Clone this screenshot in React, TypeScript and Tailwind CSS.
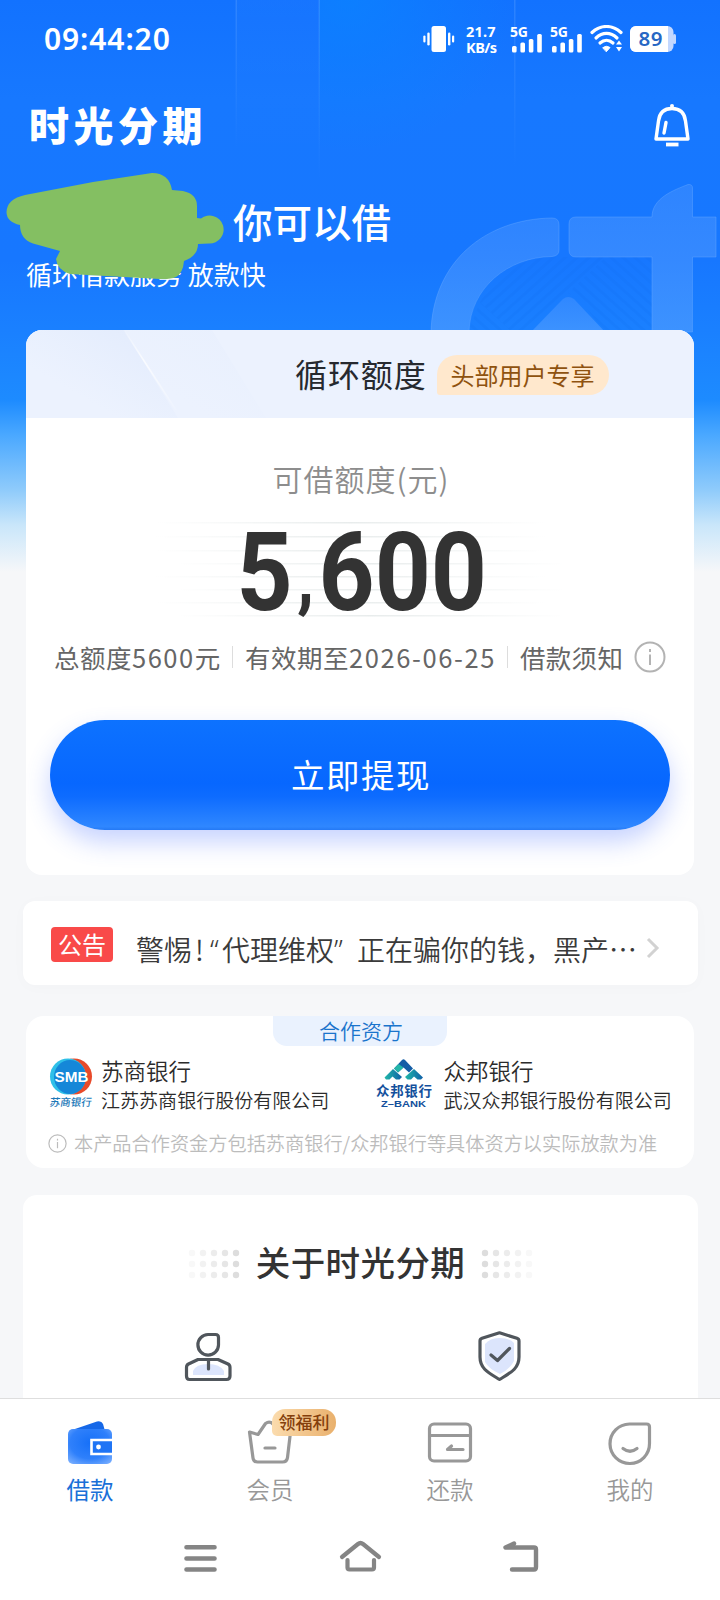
import React from "react";

const CJK = "font-['Noto_Sans_CJK_SC',sans-serif]";

function Signal() {
  return (
    <svg width="34" height="28" viewBox="0 0 34 28" fill="#fff" className="overflow-visible">
      <text x="0" y="11.6" fontSize="14" fontWeight="700" fontFamily="'Noto Sans', sans-serif" textLength="18">5G</text>
      <rect x="2" y="21" width="4.6" height="6.5" rx="1.5" />
      <rect x="10.4" y="17.5" width="4.6" height="10" rx="1.5" />
      <rect x="18.8" y="14" width="4.6" height="13.5" rx="1.5" />
      <rect x="27.2" y="9" width="4.6" height="18.5" rx="1.5" />
    </svg>
  );
}

function StatusBar() {
  return (
    <div className="flex h-[78px] items-center pl-[44px] pr-[44px] text-white">
      <span className="font-['Noto_Sans',sans-serif] text-[30px] font-semibold leading-none tracking-[0.9px]">09:44:20</span>
      <div className="ml-auto flex items-center">
        <svg width="32" height="28" viewBox="0 0 32 28" fill="#fff">
          <rect x="8.5" y="1" width="14.5" height="26" rx="2.5" />
          <rect x="4.3" y="7.5" width="2.4" height="13" rx="1.2" />
          <rect x="0.3" y="10.5" width="2.2" height="7" rx="1.1" />
          <rect x="25" y="7.5" width="2.4" height="13" rx="1.2" />
          <rect x="29" y="10.5" width="2.2" height="7" rx="1.1" />
        </svg>
        <div className="ml-[11px] w-[33px] whitespace-nowrap font-['Noto_Sans',sans-serif] text-[14.5px] font-bold leading-[16px]">
          <div className="tracking-[0.2px]">21.7</div>
          <div className="tracking-[-0.5px]">KB/s</div>
        </div>
        <div className="ml-[11px] flex gap-[6px]">
          <Signal />
          <Signal />
        </div>
        <svg className="ml-[6px]" width="34" height="28" viewBox="0 0 34 28" fill="none" stroke="#fff" strokeWidth="3.2" strokeLinecap="round">
          <path d="M2 7.500C10.500 -.5 22.500 -.5 31 7.500" />
          <path d="M6 13C12.500 6.800 20.500 6.800 27 13" />
          <path d="M10 18C14 14.300 19 14.300 23 18" />
          <path d="M13 22.500q3.500-2.500 7 0l-3.500 4z" fill="#fff" strokeWidth="1" strokeLinejoin="round" />
          <path d="M26 19.500l3-4 3 4zM26 22l3 4.500 3-4.500z" fill="#fff" stroke="none" />
        </svg>
        <svg className="ml-[6px]" width="46" height="28" viewBox="0 0 46 28">
          <rect x="0" y="1" width="43.500" height="26" rx="6" fill="#c3d8ff" />
          <rect x="43" y="9" width="3" height="10" rx="1.500" fill="#c3d8ff" />
          <path d="M6 1H38V27H6a6 6 0 0 1-6-6V7a6 6 0 0 1 6-6z" fill="#fff" />
          <text x="8.500" y="21.300" fontSize="20.500" fontWeight="600" fill="#2767c4" fontFamily="'Noto Sans', sans-serif" textLength="24">89</text>
        </svg>
      </div>
    </div>
  );
}

function HeroArt() {
  return (
    <svg className="absolute left-0 top-0" width="720" height="340" viewBox="0 0 720 340" fill="none">
      <defs>
        <linearGradient id="band" x1="0" y1="0" x2="0" y2="1">
          <stop offset="0" stopColor="#fff" stopOpacity="0.02" />
          <stop offset="1" stopColor="#fff" stopOpacity="0" />
        </linearGradient>
        <linearGradient id="seam" x1="0" y1="0" x2="0" y2="1">
          <stop offset="0" stopColor="#7ab4ff" stopOpacity="0.25" />
          <stop offset="1" stopColor="#7ab4ff" stopOpacity="0" />
        </linearGradient>
        <linearGradient id="mark" x1="0" y1="0" x2="0" y2="1">
          <stop offset="0" stopColor="#5a9dff" stopOpacity="0.35" />
          <stop offset="1" stopColor="#5fa5ff" stopOpacity="0.5" />
        </linearGradient>
        <pattern id="hatch" width="8" height="8" patternUnits="userSpaceOnUse" patternTransform="rotate(48)">
          <rect width="3" height="8" fill="#0a62e6" fillOpacity="0.1" />
        </pattern>
        <pattern id="hatchBack" width="8" height="8" patternUnits="userSpaceOnUse" patternTransform="rotate(-48)">
          <rect width="3" height="8" fill="#0a62e6" fillOpacity="0.1" />
        </pattern>
        <radialGradient id="glow" cx="0.15" cy="0" r="0.85">
          <stop offset="0" stopColor="#0a84ff" stopOpacity="0.7" />
          <stop offset="1" stopColor="#0a84ff" stopOpacity="0" />
        </radialGradient>
      </defs>
      <rect x="236" y="0" width="84" height="160" fill="url(#band)" />
      <rect x="319" y="0" width="196" height="180" fill="url(#glow)" />
      <rect x="235.500" y="0" width="1.500" height="150" fill="url(#seam)" />
      <rect x="318.500" y="0" width="1.500" height="180" fill="url(#seam)" />
      <rect x="514" y="0" width="1.500" height="168" fill="url(#seam)" />
      <path d="M556 257H606L530 330H510L480 302Q505 258 556 257z" fill="url(#hatch)" />
      <path d="M606 257H652V330H603L580 300L568 293z" fill="url(#hatchBack)" />
      <path d="M480 302L510 330H469z" fill="url(#hatchBack)" />
      <path d="M431 332C433 262 485 219 552 218Q559 218 559 225V250Q559 256 552 256.500C508 257 470 288 469 332z" fill="url(#mark)" stroke="#6aabff" strokeOpacity="0.4" />
      <path d="M576 217H652C652 198 674 190 688 184.500Q692.500 184 692.500 188V217H716V257H692.500V332H652V257H576Q569 257 569 250V224Q569 217 576 217z" fill="url(#mark)" stroke="#6aabff" strokeOpacity="0.4" />
      <path d="M531 332L563 299Q568 295 574 299L605 332z" fill="url(#mark)" />
    </svg>
  );
}

function Info({ size, stroke }: { size: number; stroke: number }) {
  return (
    <svg width={size} height={size} viewBox="0 0 32 32" fill="none" stroke="currentColor" strokeWidth={stroke} className="shrink-0">
      <circle cx="16" cy="16" r="14.500" />
      <path d="M16 13.500V24" />
      <path d="M16 8V11" />
    </svg>
  );
}

function QuotaCard() {
  const lines = [0, 14, 28, 41, 54, 67, 80, 93];
  return (
    <section className="mx-[26px] flex h-[545px] flex-col overflow-hidden rounded-[16px] bg-white">
      <div className="relative flex h-[88px] shrink-0 items-center bg-[#ecf2fe] pl-[269px]">
        <svg className="absolute left-0 top-0" width="300" height="88" viewBox="0 0 300 88">
          <defs>
            <linearGradient id="sheenA" x1="0" y1="1" x2="1" y2="0">
              <stop offset="0.3" stopColor="#e3ecfd" stopOpacity="0" />
              <stop offset="1" stopColor="#e1eafc" />
            </linearGradient>
            <linearGradient id="edge" x1="0" y1="0" x2="0" y2="1">
              <stop offset="0" stopColor="#fff" stopOpacity="0.1" />
              <stop offset="0.4" stopColor="#fff" stopOpacity="0.7" />
              <stop offset="1" stopColor="#fff" stopOpacity="0.1" />
            </linearGradient>
          </defs>
          <path d="M0 0H98L152 88H0z" fill="url(#sheenA)" />
          <path d="M98 0H186L240 88H152z" fill="url(#sheenA)" opacity="0.35" />
          <path d="M98 0L150 80" stroke="url(#edge)" strokeWidth="1.500" />
        </svg>
        <span className="relative whitespace-nowrap pb-[2px] text-[32px] leading-none tracking-[0.900px] text-[#26292f]">循环额度</span>
        <span className="relative ml-[10px] mt-px flex h-[40px] w-[172px] items-center justify-center rounded-[20px] rounded-bl-[3px] bg-[#ffe8cd] text-[24px] leading-none text-[#8f520f]">头部用户专享</span>
      </div>
      <div className="mt-[44px] pl-[2px] text-center text-[30px] font-[350] leading-[32px] tracking-[1px] text-[#8d8d8d]">可借额度(元)</div>
      <div className="relative mt-[28px] flex h-[94px] justify-center">
        <svg className="absolute left-[130px] top-0" width="410" height="95" viewBox="0 0 410 95">
          <defs>
            <linearGradient id="rule" x1="0" x2="1" y1="0" y2="0">
              <stop offset="0" stopColor="#eaeeee" stopOpacity="0" />
              <stop offset="0.5" stopColor="#e8ecec" />
              <stop offset="1" stopColor="#eaeeee" stopOpacity="0" />
            </linearGradient>
          </defs>
          {lines.map((y) => (
            <rect key={y} x={y % 2 ? 20 : 0} y={y} width="390" height="1.500" fill="url(#rule)" />
          ))}
        </svg>
        <span className="relative left-[2px] top-[-4px] h-[110px] origin-center scale-x-[0.89] whitespace-nowrap font-['Roboto',sans-serif] text-[110px] font-bold leading-[110px] text-[#333]">
          5<span className="relative -top-[7px] inline-block w-[29px] pl-[5px] text-[78px] leading-none">,</span>600
        </span>
      </div>
      <div className="mt-[26px] flex h-[30px] items-center whitespace-nowrap pl-[28px] text-[25.500px] leading-none text-[#666]">
        <span className="w-[167px] tracking-[0.5px]">总额度<span className="tracking-[1.500px]">5600</span>元</span>
        <i className="ml-[11px] h-[22px] w-px bg-[#ddd]" />
        <span className="ml-[12px] w-[250px] tracking-[0.5px]">有效期至<span className="tracking-[1.600px]">2026-06-25</span></span>
        <i className="ml-[12px] h-[22px] w-px bg-[#ddd]" />
        <span className="ml-[12px] w-[104px] tracking-[0.3px]">借款须知</span>
        <span className="ml-[10px] text-[#b3b3b3]"><Info size={32} stroke={2} /></span>
      </div>
      <button className="ml-[24px] mt-[48px] flex h-[110px] w-[620px] shrink-0 items-center justify-center rounded-full bg-[linear-gradient(180deg,#0d72ff_0%,#0767ff_58%,#0e6cff_70%,#2f87ff_97%,#2479f5_100%)] pb-[3px] pl-[2px] text-[33.500px] leading-none tracking-[1.500px] text-white shadow-[0_12px_24px_rgba(70,110,255,0.3)]">
        立即提现
      </button>
    </section>
  );
}

function Notice() {
  return (
    <section className="ml-[23px] mt-[26px] flex h-[84px] w-[675px] shrink-0 items-center rounded-[12px] bg-white pl-[28px] shadow-[0_2px_16px_rgba(0,0,0,0.02)]">
      <span className="mt-[2px] flex h-[35px] w-[62px] items-center justify-center rounded-[4px] bg-[#f94a49] text-[24px] leading-none text-white">公告</span>
      <p className="ml-[23px] mt-[11px] flex whitespace-nowrap text-[28px] font-[350] leading-none text-[#3a3a3a]">
        <span className="w-[59px]">警惕</span>
        <span className="w-[15px]">!</span>
        <span className="w-[12px] font-['Noto_Sans',sans-serif]">“</span>
        <span className="w-[112px]">代理维权</span>
        <span className="w-[23px] font-['Noto_Sans',sans-serif]">”</span>
        <span className="w-[252px]">正在骗你的钱，黑产</span>
        <span className="w-[28px]">…</span>
      </p>
      <svg className="ml-[9px] mt-[10px]" width="14" height="22" viewBox="0 0 14 22" fill="none" stroke="#d2d2d2" strokeWidth="3">
        <path d="M2 2L11 11L2 20" />
      </svg>
    </section>
  );
}

function SmbLogo() {
  return (
    <svg width="46" height="52" viewBox="0 0 46 52" className="shrink-0">
      <ellipse cx="25" cy="18.500" rx="18" ry="18" fill="#e84a2a" />
      <ellipse cx="19" cy="18.500" rx="18" ry="18" fill="#2fc0e8" />
      <ellipse cx="21" cy="19" rx="16" ry="17" fill="#1587d8" />
      <text x="5.500" y="23.700" fontSize="14.500" fontWeight="700" fill="#fff" fontFamily="'Liberation Sans', sans-serif" textLength="34" lengthAdjust="spacingAndGlyphs">SMB</text>
      <text x="1" y="48" fontSize="10.500" fontWeight="500" fill="#1b78b8" fontFamily="'Noto Sans CJK SC', sans-serif" textLength="42" transform="skewX(-8) translate(6 0)">苏商银行</text>
    </svg>
  );
}

function ZBankLogo() {
  return (
    <svg width="56" height="52" viewBox="0 0 56 52" className="shrink-0">
      <defs>
        <linearGradient id="zg" x1="0" x2="1" y1="0" y2="0">
          <stop offset="0" stopColor="#20b8a8" />
          <stop offset="1" stopColor="#0f5fa8" />
        </linearGradient>
      </defs>
      <path d="M18 10.500L26 2Q27.500 .5 29 2L37 10.500L33 14.500L27.500 9.500L22 14.500z" fill="#145da6" />
      <path d="M18 10.500L22.500 6L27.500 9.500L22 14.500z" fill="#23b6a8" />
      <path d="M8.500 19.500L17 11L26 19L23.500 21.500H20L16.500 18.500L13.500 21.500H10z" fill="url(#zg)" />
      <path d="M29 19L38 11L47 19.500L45 21.500H41.500L38 18.500L35 21.500H31.500z" fill="url(#zg)" />
      <text x="0" y="38" fontSize="13.500" fontWeight="700" fill="#14509c" fontFamily="'Noto Sans CJK SC', sans-serif" textLength="56">众邦银行</text>
      <text x="5" y="48.800" fontSize="8.500" fontWeight="700" fill="#14509c" fontFamily="'Liberation Sans', sans-serif" textLength="45" lengthAdjust="spacingAndGlyphs">Z–BANK</text>
    </svg>
  );
}

function Bank({ name, full }: { name: string; full: string }) {
  return (
    <div className="whitespace-nowrap font-[350] text-[#2b2b2b]">
      <div className="text-[22.500px] leading-[30px]">{name}</div>
      <div className="text-[19.050px] leading-[30px]">{full}</div>
    </div>
  );
}

function Partners() {
  return (
    <section className="mx-[26px] mt-[31px] flex h-[152px] shrink-0 flex-col rounded-[18px] bg-white">
      <div className="mx-auto flex h-[30px] w-[174px] shrink-0 items-center justify-center rounded-b-[14px] bg-[#eaf2fe] pb-[2px] pl-[2px] text-[21px] font-[350] leading-none text-[#1a74cc]">合作资方</div>
      <div className="mt-[9px] flex h-[60px] items-start">
        <div className="ml-[23px] mt-[3px] w-[52px]"><SmbLogo /></div>
        <Bank name="苏商银行" full="江苏苏商银行股份有限公司" />
        <div className="ml-[47px] mt-[3px] w-[67px]"><ZBankLogo /></div>
        <Bank name="众邦银行" full="武汉众邦银行股份有限公司" />
      </div>
      <div className="mt-[17px] flex items-center whitespace-nowrap pl-[22px] text-[19.200px] font-[350] leading-[22px] text-[#bcbcbc]">
        <Info size={19} stroke={2} />
        <span className="ml-[7px]">本产品合作资金方包括苏商银行/众邦银行等具体资方以实际放款为准</span>
      </div>
    </section>
  );
}

function Dots({ flip }: { flip?: boolean }) {
  const cols = [0.04, 0.08, 0.11, 0.15, 0.2];
  return (
    <svg width="52" height="30" viewBox="0 0 52 30" className={flip ? "-scale-x-100" : ""}>
      {cols.map((o, c) =>
        [4, 15, 26].map((y) => <circle key={`${c}-${y}`} cx={4 + c * 11} cy={y} r="3.200" fill="#555" fillOpacity={o} />)
      )}
    </svg>
  );
}

function About() {
  return (
    <section className="ml-[23px] mt-[27px] h-[203px] w-[675px] shrink-0 rounded-t-[14px] bg-white pt-[48px]">
      <div className="flex h-[42px] items-center justify-center gap-[16px]">
        <Dots />
        <h2 className="whitespace-nowrap pb-[5px] text-[34.500px] font-medium leading-none tracking-[0.400px] text-[#333]">关于时光分期</h2>
        <Dots flip />
      </div>
      <div className="mt-[46px] flex pl-[161px]">
        <svg width="48" height="52" viewBox="0 0 48 52" fill="none" stroke="#50565c" strokeWidth="3.200" strokeLinejoin="round" strokeLinecap="round">
          <path d="M9 44V40Q12 33 24 33T40 40V44z" fill="#dce5fc" stroke="none" />
          <path d="M24 3.500H31.500Q34.500 3.500 34.500 6.500V14A10.300 10.300 0 1 1 24 3.500z" />
          <path d="M14 28.500H34L44 33Q46 34 46 36.500V45Q46 48.500 42.500 48.500H5.500Q2.500 48.500 2.500 45V36.500Q2.500 34 4.500 33z" />
          <path d="M24.500 29V38" />
        </svg>
        <svg className="ml-[246px]" width="43" height="52" viewBox="0 0 43 52" fill="none" stroke="#50565c" strokeWidth="3.200" strokeLinejoin="round" strokeLinecap="round">
          <path d="M7 13Q12 7 21 7Q32 7 36 12V30Q32 38 22 43Q11 38 7 31z" fill="#dce5fc" stroke="none" />
          <path d="M21.500 1.800L39 7.300Q41 8 41 10V26C41 38 32 42 21.500 48.500C11 42 2 38 2 26V10Q2 8 4 7.300z" />
          <path d="M13 24L19.500 29.500L31.500 17.500" />
        </svg>
      </div>
    </section>
  );
}

function TabBar() {
  return (
    <nav className="relative grid h-[122px] shrink-0 grid-cols-4 border-t border-[#dedede] bg-white">
      <div className="flex flex-col items-center pt-[20px] text-[#1a70d8]">
        <svg width="46" height="48" viewBox="0 0 46 48">
          <defs>
            <radialGradient id="wallet" cx="0.5" cy="0.4" r="0.75">
              <stop offset="0" stopColor="#1670f8" />
              <stop offset="0.6" stopColor="#2f80fb" />
              <stop offset="1" stopColor="#7db1ff" />
            </radialGradient>
          </defs>
          <path d="M2 12L30 2.500Q34.500 1.500 36 5L38 12z" fill="#1668e8" />
          <rect x="1" y="10" width="44" height="35" rx="5" fill="url(#wallet)" />
          <path d="M45 21H24.500V35H45" fill="#1f74f5" stroke="#fff" strokeWidth="2.600" />
          <circle cx="31.500" cy="28" r="2.400" fill="#fff" />
        </svg>
        <span className="mt-[10px] text-[23.500px] leading-[24px]">借款</span>
      </div>
      <div className="relative flex flex-col items-center pt-[20px] text-[#989898]">
        <svg width="46" height="48" viewBox="0 0 46 48" fill="none" stroke="#989898" strokeWidth="3.200" strokeLinecap="round" strokeLinejoin="round">
          <path d="M2.500 13L11 15.500L18.500 4.500Q22.500 1.500 26 5L33 15.500L43.500 13L40.500 38.500Q40 43 35.500 43H10.500Q6.500 43 6 39z" />
          <path d="M18 29H28" />
        </svg>
        <span className="mt-[10px] text-[23.500px] font-[350] leading-[24px]">会员</span>
        <span className="absolute left-[92px] top-[10px] flex h-[27px] w-[64px] items-center justify-center rounded-[13px] rounded-bl-[5px] bg-gradient-to-r from-[#fbdcae] to-[#e9b06c] pb-[2px] text-[17px] font-medium leading-none text-[#843f0c]">领福利</span>
      </div>
      <div className="flex flex-col items-center pt-[20px] text-[#989898]">
        <svg width="46" height="48" viewBox="0 0 46 48" fill="none" stroke="#989898" strokeWidth="3.200" strokeLinecap="round" strokeLinejoin="round">
          <rect x="2.500" y="5" width="41" height="37" rx="4.500" />
          <path d="M3 16.500H43" />
          <path d="M36 30.500H20.500L24.500 27" />
        </svg>
        <span className="mt-[10px] text-[23.500px] font-[350] leading-[24px]">还款</span>
      </div>
      <div className="flex flex-col items-center pt-[20px] text-[#989898]">
        <svg width="46" height="48" viewBox="0 0 46 48" fill="none" stroke="#989898" strokeWidth="3.200" strokeLinecap="round" strokeLinejoin="round">
          <path d="M22.500 5H39.500Q42.500 5 42.500 8V24.500A19.750 19.750 0 1 1 22.500 5z" />
          <path d="M16 29.500Q23 35 30 29.500" />
        </svg>
        <span className="mt-[10px] text-[23.500px] font-[350] leading-[24px]">我的</span>
      </div>
    </nav>
  );
}

function SystemNav() {
  return (
    <div className="flex h-[80px] shrink-0 items-start bg-white pl-[184px] pt-[19px]">
      <svg width="34" height="38" viewBox="0 0 34 38" stroke="#858585" strokeWidth="4.600" strokeLinecap="round">
        <path d="M2.500 8.300H30.500M2.500 19.500H30.500M2.500 30.500H30.500" />
      </svg>
      <svg className="ml-[121px]" width="44" height="38" viewBox="0 0 44 38" fill="none" stroke="#858585" strokeWidth="4.200" strokeLinecap="round" strokeLinejoin="round">
        <path d="M3 18L19 5Q21.500 3 24 5L40 18" />
        <path d="M8.500 21V28.500Q8.500 30.500 10.500 30.500H33Q35 30.500 35 28.500V21" />
      </svg>
      <svg className="ml-[119px]" width="38" height="38" viewBox="0 0 38 38" fill="none" stroke="#858585" strokeWidth="4.400" strokeLinecap="round" strokeLinejoin="round">
        <path d="M12 4.500L3.500 8.500H32Q34 8.500 34 10.500V28Q34 30.500 32 30.500H10" />
      </svg>
    </div>
  );
}

export default function App() {
  return (
    <div className={`relative flex h-[1600px] w-[720px] flex-col overflow-hidden bg-[#f6f7f9] ${CJK}`}>
      <div className="absolute left-0 top-0 h-[575px] w-full bg-[linear-gradient(180deg,#1272ff_0px,#1778ff_100px,#1777ff_260px,#1a80ff_330px,#1d8bff_400px,#4aa8ff_435px,#8fcbfb_490px,#c9e6fa_525px,#f6f7f9_572px)]" />
      <HeroArt />
      <div className="relative flex min-h-0 flex-1 flex-col">
        <StatusBar />
        <div className="flex h-[96px] items-center justify-between pl-[29px] pr-[29px] text-white">
          <h1 className="pb-[5px] text-[40px] font-black leading-none tracking-[4.500px]">时光分期</h1>
          <svg className="-mt-[2px]" width="38" height="46" viewBox="0 0 38 46" fill="none" stroke="#fff" strokeWidth="3.400" strokeLinejoin="round" strokeLinecap="round">
            <circle cx="19" cy="4" r="2" fill="#fff" stroke="none" />
            <path d="M3 37L5.500 19C6.500 10.500 11 6.500 19 6.500C27 6.500 31.500 10.500 32.500 19L35 37z" />
            <path d="M13 20.500L11 31" />
            <path d="M13 42.500H25.500" strokeLinecap="butt" strokeWidth="3.800" />
          </svg>
        </div>
        <div className="flex h-[88px] items-center pl-[233px] pt-[6px] text-[39.500px] font-medium leading-none text-white">你可以借</div>
        <div className="-mt-px h-[27px] whitespace-nowrap pl-[26px] text-[26px] leading-[25px] text-white">循环借款服务 放款快</div>
        <svg className="absolute left-0 top-[165px]" width="230" height="120" viewBox="0 165 230 120">
          <path d="M25 195L93 182L152 173Q169 173 172 190L183 191Q197 194 197 206V218L201 218.500A14 14 0 1 1 209 243.500L198 244Q198 256 184 261Q183 273 176 277Q170 279.500 160 279L70 274Q57 270 56 259L60 251L33 243.500Q20 239 20 225Q6.500 222 6.500 212Q7 199 25 195z" fill="#84bf62" />
        </svg>
        <div className="mt-[42px] shrink-0"><QuotaCard /></div>
        <Notice />
        <Partners />
        <About />
      </div>
      <div className="relative"><TabBar /><SystemNav /></div>
    </div>
  );
}
